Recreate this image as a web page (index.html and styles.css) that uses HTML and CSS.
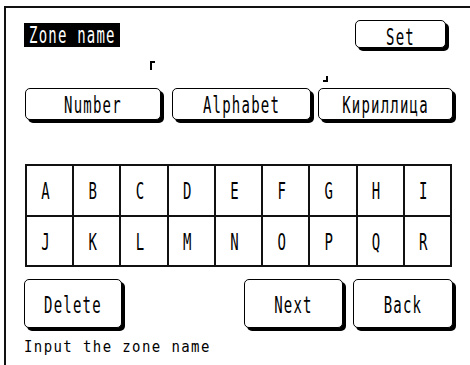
FILE: index.html
```html
<!DOCTYPE html>
<html>
<head>
<meta charset="utf-8">
<link rel="stylesheet" href="styles.css">
</head>
<body>
<div class="frame">
  <div class="content">
    <div class="header">
      <div class="title"><span class="tall">Zone name</span></div>
      <button class="btn btn-set"><span class="tall">Set</span></button>
    </div>
    <div class="marks">
      <span class="mark mark-open"></span>
      <span class="mark mark-close"></span>
    </div>
    <div class="modes">
      <button class="btn btn-number"><span class="tall">Number</span></button>
      <button class="btn btn-alpha"><span class="tall">Alphabet</span></button>
      <button class="btn btn-cyr"><span class="tall">Кириллица</span></button>
    </div>
    <div class="keys">
      <div class="key"><span class="tall">A</span></div>
      <div class="key"><span class="tall">B</span></div>
      <div class="key"><span class="tall">C</span></div>
      <div class="key"><span class="tall">D</span></div>
      <div class="key"><span class="tall">E</span></div>
      <div class="key"><span class="tall">F</span></div>
      <div class="key"><span class="tall">G</span></div>
      <div class="key"><span class="tall">H</span></div>
      <div class="key"><span class="tall">I</span></div>
      <div class="key"><span class="tall">J</span></div>
      <div class="key"><span class="tall">K</span></div>
      <div class="key"><span class="tall">L</span></div>
      <div class="key"><span class="tall">M</span></div>
      <div class="key"><span class="tall">N</span></div>
      <div class="key"><span class="tall">O</span></div>
      <div class="key"><span class="tall">P</span></div>
      <div class="key"><span class="tall">Q</span></div>
      <div class="key"><span class="tall">R</span></div>
    </div>
    <div class="actions">
      <button class="btn btn-delete"><span class="tall">Delete</span></button>
      <button class="btn btn-next"><span class="tall">Next</span></button>
      <button class="btn btn-back"><span class="tall">Back</span></button>
    </div>
    <div class="status"><span class="mid">Input the zone name</span></div>
  </div>
</div>
</body>
</html>
```

FILE: styles.css
```css
html, body {
  margin: 0;
  padding: 0;
  background: #fff;
  overflow: hidden;
}

body {
  width: 470px;
  height: 365px;
  font-family: "DejaVu Sans Mono", "Liberation Mono", monospace;
  font-size: 14px;
  color: #000;
}

.frame {
  margin: 6px 0 0 4px;
  border-top: 2px solid #111;
  border-left: 2px solid #111;
  height: 357px;
  overflow: hidden;
}

.content {
  padding-left: 19px;
  width: 431px;
}

.tall {
  display: inline-block;
  font-size: 14px;
  letter-spacing: 1.2px;
  transform: scaleY(1.65);
  line-height: 14px;
}

.mid {
  display: inline-block;
  font-size: 14px;
  letter-spacing: 1.4px;
  transform: scaleY(1.15);
  line-height: 14px;
}

.header {
  display: flex;
  justify-content: space-between;
  align-items: flex-start;
  padding-top: 12px;
}

.title {
  margin-top: 3px;
  margin-left: -1px;
  background: #000;
  color: #fff;
  height: 24px;
  padding: 0 4px 0 5px;
  display: flex;
  align-items: center;
}

.btn {
  font-family: inherit;
  font-size: 14px;
  color: #000;
  background: #fff;
  border: 1px solid #000;
  border-radius: 5px;
  box-shadow: 3px 3px 0 #000;
  padding: 0;
  margin: 0;
  display: flex;
  align-items: center;
  justify-content: center;
}

.btn-set {
  width: 91px;
  height: 28px;
  margin-right: 10px;
  padding-top: 6px;
}

.marks {
  display: flex;
  align-items: flex-start;
  height: 40px;
}

.mark {
  display: block;
}

.mark-open {
  margin-top: 13px;
  margin-left: 125px;
  width: 3px;
  height: 7px;
  border-top: 2px solid #000;
  border-left: 2px solid #000;
}

.mark-close {
  margin-top: 28px;
  margin-left: 168px;
  width: 3px;
  height: 4px;
  border-bottom: 2px solid #000;
  border-right: 2px solid #000;
}

.modes {
  display: flex;
  align-items: flex-start;
}

.modes .btn {
  height: 32px;
  padding-top: 2px;
}

.btn-number {
  width: 136px;
}

.btn-alpha {
  width: 139px;
  margin-left: 11px;
}

.btn-cyr {
  width: 135px;
  margin-left: 7px;
}

.keys {
  margin-top: 44px;
  width: 427px;
  display: grid;
  grid-template-columns: repeat(9, 1fr);
  grid-template-rows: 49px 48px;
  gap: 2px;
  padding: 2px;
  box-sizing: border-box;
  background: #111;
}

.key {
  background: #fff;
  display: flex;
  align-items: center;
  justify-content: center;
  padding-right: 7px;
  padding-top: 1px;
}

.actions {
  display: flex;
  align-items: flex-start;
  margin-top: 12px;
}

.actions .btn {
  height: 49px;
  padding-top: 2px;
}

.btn-delete {
  width: 98px;
  margin-left: -1px;
}

.btn-next {
  width: 99px;
  margin-left: 122px;
}

.btn-back {
  width: 100px;
  margin-left: 10px;
}

.status {
  margin-top: 10px;
  margin-left: -1px;
  line-height: 16px;
}
```
